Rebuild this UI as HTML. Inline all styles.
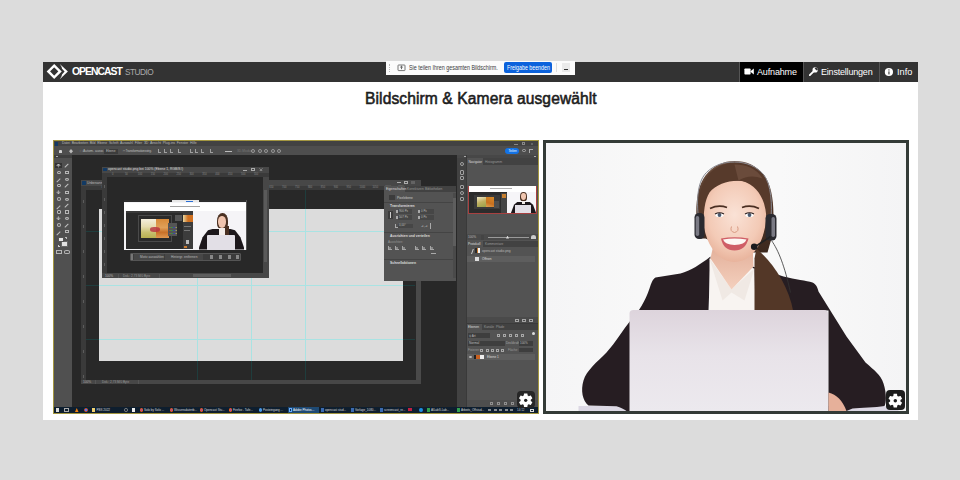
<!DOCTYPE html>
<html><head><meta charset="utf-8">
<style>
*{margin:0;padding:0;box-sizing:border-box}
html,body{width:960px;height:480px;overflow:hidden;background:#dcdcdc;font-family:"Liberation Sans",sans-serif}
.a{position:absolute}
#win{left:43px;top:62px;width:875px;height:358px;background:#fff}
#hdr{left:43px;top:62px;width:875px;height:20px;background:#333}
.wt{color:#fff;white-space:nowrap}
.pt{white-space:nowrap;overflow:visible}
</style></head><body>
<div id="win" class="a"></div>
<div id="hdr" class="a"></div>
<!-- logo -->
<svg class="a" style="left:45px;top:62px" width="25" height="20" viewBox="0 0 25 20">
<path d="M9.2 3.6 L15.05 9.4 L9.2 15.25 L3.35 9.4 Z" fill="none" stroke="#fff" stroke-width="2.4"/>
<path d="M14.8 2 L22.9 9.6 L14.8 17.3 Q17.2 13.8 17 12.5 L19.6 9.6 L17 6.8 Q17.2 5.4 14.8 2 Z" fill="#fff"/>
</svg>
<div class="a wt" style="left:72px;top:65px;font-size:10.4px;font-weight:bold;line-height:14px;letter-spacing:-1px">OPENCAST</div>
<div class="a t" style="left:125px;top:66px;font-size:8.3px;line-height:12px;color:#aaa;letter-spacing:-0.55px">STUDIO</div>

<!-- share notification -->
<div class="a" style="left:386px;top:61px;width:189px;height:14px;background:#fbfbfb"></div>
<div class="a wt" style="left:409px;top:63px;font-size:6.8px;line-height:10px;color:#3a3a3a;transform:scaleX(0.79);transform-origin:0 0">Sie teilen Ihren gesamten Bildschirm.</div>
<div class="a" style="left:504px;top:62px;width:48px;height:11px;background:#0b62dc;border-radius:2px"></div>
<div class="a wt" style="left:507px;top:63px;font-size:6.6px;line-height:9px;transform:scaleX(0.8);transform-origin:0 0">Freigabe beenden</div>
<div class="a" style="left:562px;top:63px;width:8px;height:9px;background:#eaeaea"></div>

<!-- nav -->
<div class="a" style="left:740px;top:62px;width:63px;height:20px;background:#000"></div>
<div class="a" style="left:739px;top:62px;width:1px;height:20px;background:#555"></div>
<div class="a" style="left:803px;top:62px;width:1px;height:20px;background:#555"></div>
<div class="a" style="left:879px;top:62px;width:1px;height:20px;background:#555"></div>
<div class="a wt" style="left:757px;top:66px;font-size:9px;line-height:12px;letter-spacing:-0.15px">Aufnahme</div>
<div class="a wt" style="left:821px;top:66px;font-size:9px;line-height:12px;letter-spacing:-0.2px">Einstellungen</div>
<div class="a wt" style="left:897px;top:66px;font-size:9.2px;line-height:12px">Info</div>

<svg class="a" style="left:744px;top:68px" width="10" height="7" viewBox="0 0 10 7"><rect x="0.4" y="0.4" width="6.2" height="6.2" rx="0.8" fill="#fff"/><path d="M6.2 3.5 L9.8 0.6 L9.8 6.4 Z" fill="#fff"/></svg>
<svg class="a" style="left:809px;top:67px" width="9" height="9" viewBox="0 0 9 9"><path d="M0.8 8.2 L4.6 4.4" stroke="#fff" stroke-width="1.9" stroke-linecap="round"/><circle cx="6.1" cy="2.9" r="2.6" fill="#fff"/><path d="M7 0.2 L9 2.2 L7.6 3.6 L5.6 1.6 Z" fill="#333"/></svg>
<svg class="a" style="left:884px;top:67px" width="10" height="10" viewBox="0 0 10 10"><circle cx="4.9" cy="5" r="4.1" fill="#fff"/><rect x="4.4" y="4.4" width="1.1" height="3" fill="#333"/><circle cx="4.95" cy="2.9" r="0.65" fill="#333"/></svg>
<!-- notification details -->
<div class="a" style="left:389px;top:64px;width:1px;height:8px;border-left:1px dotted #bbb"></div>
<svg class="a" style="left:397px;top:64px" width="9" height="8" viewBox="0 0 9 8"><rect x="1" y="1" width="7" height="5.6" rx="0.6" fill="none" stroke="#555" stroke-width="0.8"/><path d="M4.5 2.2 L4.5 5.2 M3.2 3.4 L4.5 2.2 L5.8 3.4" stroke="#444" stroke-width="0.8" fill="none"/></svg>
<div class="a" style="left:556px;top:63px;width:1px;height:9px;background:#ddd"></div>
<div class="a" style="left:564px;top:69px;width:4px;height:1px;background:#333"></div>
<!-- title -->
<div class="a t" style="left:365px;top:89px;font-size:15.6px;line-height:20px;color:#1e1e1e;white-space:nowrap;letter-spacing:0.1px;-webkit-text-stroke:0.55px #1a1a1a">Bildschirm &amp; Kamera ausgewählt</div>

<!-- left video -->
<div class="a" style="left:54px;top:141px;width:484px;height:272px;background:#282828;"></div>
<div class="a" style="left:54px;top:141px;width:484px;height:5.3px;background:#424242;"></div>
<div class="a" style="left:54px;top:146.3px;width:484px;height:8.5px;background:#4e4e4e;"></div>
<div class="a" style="left:54.5px;top:141.6px;width:3.3px;height:4.0px;background:#123a64;border-radius:.5px"></div>
<div class="a pt" style="left:62px;top:141.4px;font-size:3.5px;line-height:4.5px;color:#b8b8b8;letter-spacing:-0.06px">Datei&nbsp; Bearbeiten&nbsp; Bild&nbsp; Ebene&nbsp; Schrift&nbsp; Auswahl&nbsp; Filter&nbsp; 3D&nbsp; Ansicht&nbsp; Plug-ins&nbsp; Fenster&nbsp; Hilfe</div>
<div class="a" style="left:59px;top:149.5px;width:3px;height:3.5px;background:#d0d0d0;border-radius:1px 1px 0 0"></div>
<div class="a" style="left:69px;top:149px;width:4px;height:4.5px;background:#bbb;clip-path:polygon(50% 0,100% 50%,50% 100%,0 50%)"></div>
<div class="a pt" style="left:80px;top:148.7px;font-size:3.5px;line-height:4.5px;color:#bbb;">&#9633; Autom. ausw.:</div>
<div class="a" style="left:104px;top:148.8px;width:14px;height:5.0px;background:#3c3c3c;"></div>
<div class="a pt" style="left:106px;top:149px;font-size:3.3px;line-height:4.3px;color:#bbb;">Ebene</div>
<div class="a pt" style="left:123px;top:148.7px;font-size:3.3px;line-height:4.3px;color:#bbb;letter-spacing:-0.2px">&#9633; Transformationsstrg.</div>
<div class="a" style="left:158px;top:149.3px;width:3px;height:3.9px;background:transparent;border-left:.7px solid #bbb;border-bottom:.7px solid #bbb;opacity:.75"></div>
<div class="a" style="left:164px;top:149.3px;width:3px;height:3.9px;background:transparent;border-left:.7px solid #bbb;border-bottom:.7px solid #bbb;opacity:.75"></div>
<div class="a" style="left:170px;top:149.3px;width:3px;height:3.9px;background:transparent;border-left:.7px solid #bbb;border-bottom:.7px solid #bbb;opacity:.75"></div>
<div class="a" style="left:178px;top:149.3px;width:3px;height:3.9px;background:transparent;border-left:.7px solid #bbb;border-bottom:.7px solid #bbb;opacity:.75"></div>
<div class="a" style="left:190px;top:149.3px;width:3px;height:3.9px;background:transparent;border-left:.7px solid #bbb;border-bottom:.7px solid #bbb;opacity:.75"></div>
<div class="a" style="left:195px;top:149.3px;width:3px;height:3.9px;background:transparent;border-left:.7px solid #bbb;border-bottom:.7px solid #bbb;opacity:.75"></div>
<div class="a" style="left:201px;top:149.3px;width:3px;height:3.9px;background:transparent;border-left:.7px solid #bbb;border-bottom:.7px solid #bbb;opacity:.75"></div>
<div class="a" style="left:210px;top:149.3px;width:3px;height:3.9px;background:transparent;border-left:.7px solid #bbb;border-bottom:.7px solid #bbb;opacity:.75"></div>
<div class="a" style="left:225px;top:150.6px;width:7px;height:1.0px;background:#bbb;"></div>
<div class="a pt" style="left:237px;top:148.9px;font-size:3.3px;line-height:4.3px;color:#777;">3D-Modus:</div>
<div class="a" style="left:251px;top:149.2px;width:4px;height:4.0px;background:transparent;border:.7px solid #aaa;border-radius:50%;opacity:.8"></div>
<div class="a" style="left:258px;top:149.2px;width:4px;height:4.0px;background:transparent;border:.7px solid #aaa;border-radius:50%;opacity:.8"></div>
<div class="a" style="left:264px;top:149.2px;width:4px;height:4.0px;background:transparent;border:.7px solid #aaa;border-radius:50%;opacity:.8"></div>
<div class="a" style="left:271px;top:149.2px;width:4px;height:4.0px;background:transparent;border:.7px solid #aaa;border-radius:50%;opacity:.8"></div>
<div class="a" style="left:277px;top:149.2px;width:4px;height:4.0px;background:transparent;border:.7px solid #aaa;border-radius:50%;opacity:.8"></div>
<div class="a" style="left:505px;top:147.8px;width:14px;height:6.2px;background:#1473e6;border-radius:3px"></div>
<div class="a pt" style="left:508.5px;top:149px;font-size:3.2px;line-height:4.2px;color:#fff;">Teilen</div>
<div class="a" style="left:522px;top:148.6px;width:3.5px;height:3.5px;background:transparent;border:0.6px solid #aaa;border-radius:50%"></div>
<div class="a" style="left:529px;top:148.8px;width:4px;height:4.0px;background:transparent;border-left:0.8px solid #aaa;border-top:0.8px solid #aaa"></div>
<div class="a" style="left:514px;top:143.8px;width:3.5px;height:0.6px;background:#888;"></div>
<div class="a" style="left:521.5px;top:142.3px;width:3.5px;height:2.7px;background:transparent;border:0.6px solid #888"></div>
<div class="a" style="left:530.5px;top:142.5px;width:2.5px;height:2.0px;background:#888;opacity:.5"></div>
<div class="a" style="left:54px;top:155px;width:17.7px;height:251.5px;background:#505050;"></div>
<div class="a" style="left:54px;top:155px;width:17.7px;height:2.6px;background:#3e3e3e;"></div>
<div class="a" style="left:55.5px;top:156px;width:2.5px;height:0.8px;background:#aaa;"></div>
<div class="a" style="left:55.3px;top:162.5px;width:6.3px;height:5.8px;background:#333;"></div>
<div class="a" style="left:56.3px;top:163.60000000000002px;width:4.3px;height:4.0px;background:transparent;border:0.75px solid #cfcfcf;opacity:.8;clip-path:polygon(50% 0,100% 50%,50% 100%,0 50%)"></div>
<div class="a" style="left:56.8px;top:164.10000000000002px;width:3.3px;height:3.0px;background:#cfcfcf;clip-path:polygon(50% 0,100% 50%,50% 100%,0 50%);opacity:.7"></div>
<div class="a" style="left:64.3px;top:165.3px;width:5.2px;height:0.9px;background:#ccc;transform:rotate(-45deg);opacity:.9"></div>
<div class="a" style="left:56.5px;top:170.5px;width:4.0px;height:3.5px;background:transparent;border:0.75px solid #cfcfcf;opacity:.8;border-radius:50%"></div>
<div class="a" style="left:64.8px;top:170.5px;width:4.0px;height:3.8px;background:transparent;border:0.75px solid #cfcfcf;opacity:.8;"></div>
<div class="a" style="left:56.3px;top:180.3px;width:4.7px;height:0.8px;background:#ccc;transform:rotate(-45deg);opacity:.85"></div>
<div class="a" style="left:64.5px;top:177.5px;width:4.3px;height:3.0px;background:transparent;border:0.75px solid #cfcfcf;opacity:.8;border-radius:50%"></div>
<div class="a" style="left:56.5px;top:183.5px;width:4.0px;height:3.8px;background:transparent;border:0.75px solid #cfcfcf;opacity:.8;border-radius:1px"></div>
<div class="a" style="left:64.3px;top:185px;width:5.2px;height:0.9px;background:#ccc;transform:rotate(-45deg);opacity:.9"></div>
<div class="a" style="left:56.3px;top:190.3px;width:4.3px;height:4.0px;background:transparent;border:0.75px solid #cfcfcf;opacity:.8;clip-path:polygon(50% 0,100% 50%,50% 100%,0 50%)"></div>
<div class="a" style="left:56.8px;top:190.8px;width:3.3px;height:3.0px;background:#cfcfcf;clip-path:polygon(50% 0,100% 50%,50% 100%,0 50%);opacity:.7"></div>
<div class="a" style="left:64.8px;top:190.5px;width:4.0px;height:3.8px;background:transparent;border:0.75px solid #cfcfcf;opacity:.8;"></div>
<div class="a" style="left:56.5px;top:197.0px;width:4.0px;height:3.5px;background:transparent;border:0.75px solid #cfcfcf;opacity:.8;border-radius:50%"></div>
<div class="a" style="left:64.5px;top:197.5px;width:4.3px;height:3.0px;background:transparent;border:0.75px solid #cfcfcf;opacity:.8;border-radius:50%"></div>
<div class="a" style="left:56.3px;top:206.8px;width:4.7px;height:0.8px;background:#ccc;transform:rotate(-45deg);opacity:.85"></div>
<div class="a" style="left:64.3px;top:205px;width:5.2px;height:0.9px;background:#ccc;transform:rotate(-45deg);opacity:.9"></div>
<div class="a" style="left:56.5px;top:210.0px;width:4.0px;height:3.8px;background:transparent;border:0.75px solid #cfcfcf;opacity:.8;border-radius:1px"></div>
<div class="a" style="left:64.8px;top:210.0px;width:4.0px;height:3.8px;background:transparent;border:0.75px solid #cfcfcf;opacity:.8;"></div>
<div class="a" style="left:56.3px;top:216.3px;width:4.3px;height:4.0px;background:transparent;border:0.75px solid #cfcfcf;opacity:.8;clip-path:polygon(50% 0,100% 50%,50% 100%,0 50%)"></div>
<div class="a" style="left:56.8px;top:216.8px;width:3.3px;height:3.0px;background:#cfcfcf;clip-path:polygon(50% 0,100% 50%,50% 100%,0 50%);opacity:.7"></div>
<div class="a" style="left:64.5px;top:217px;width:4.3px;height:3px;background:transparent;border:0.75px solid #cfcfcf;opacity:.8;border-radius:50%"></div>
<div class="a" style="left:56.5px;top:223.0px;width:4.0px;height:3.5px;background:transparent;border:0.75px solid #cfcfcf;opacity:.8;border-radius:50%"></div>
<div class="a" style="left:64.3px;top:224.5px;width:5.2px;height:0.9px;background:#ccc;transform:rotate(-45deg);opacity:.9"></div>
<div class="a" style="left:56.3px;top:232.8px;width:4.7px;height:0.8px;background:#ccc;transform:rotate(-45deg);opacity:.85"></div>
<div class="a" style="left:64.8px;top:229.5px;width:4.0px;height:3.8px;background:transparent;border:0.75px solid #cfcfcf;opacity:.8;"></div>
<div class="a" style="left:61.2px;top:240.8px;width:6.7px;height:6.0px;background:#e2e2e2;border:0.6px solid #666"></div>
<div class="a" style="left:57.5px;top:236.7px;width:6.3px;height:5.8px;background:#e6e6e6;border:0.6px solid #555"></div>
<div class="a" style="left:57.5px;top:244.5px;width:2.0px;height:2.0px;background:transparent;border-left:.6px solid #ccc;border-bottom:.6px solid #ccc"></div>
<div class="a" style="left:65px;top:236.8px;width:2px;height:2.0px;background:transparent;border-top:.6px solid #bbb;border-right:.6px solid #bbb"></div>
<div class="a" style="left:56px;top:250px;width:5.5px;height:3.8px;background:transparent;border:0.75px solid #cfcfcf;opacity:.8;"></div>
<div class="a" style="left:64.2px;top:250px;width:5.6px;height:3.8px;background:transparent;border:0.75px solid #cfcfcf;opacity:.8;border-radius:40%"></div>
<div class="a" style="left:81px;top:180px;width:340px;height:5.5px;background:#474747;"></div>
<div class="a" style="left:81px;top:185.5px;width:340px;height:4.5px;background:#3a3a3a;"></div>
<div class="a" style="left:81px;top:190px;width:5.2px;height:189.8px;background:#3a3a3a;"></div>
<div class="a" style="left:415.5px;top:190px;width:5.5px;height:189.8px;background:#4a4a4a;"></div>
<div class="a" style="left:81px;top:379.8px;width:340px;height:4.7px;background:#474747;"></div>
<div class="a" style="left:95px;top:380.4px;width:1px;height:3.6px;background:#555;"></div>
<div class="a" style="left:138px;top:380.4px;width:1px;height:3.6px;background:#555;"></div>
<div class="a pt" style="left:83px;top:380px;font-size:3.2px;line-height:4.2px;color:#aaa;">100%</div>
<div class="a pt" style="left:102px;top:380px;font-size:3.1px;line-height:4.1px;color:#999;">Dok.: 2,73 M/0 Byte</div>
<div class="a" style="left:397px;top:181.5px;width:4px;height:0.8px;background:#aaa;"></div>
<div class="a" style="left:404px;top:180.8px;width:4px;height:3.2px;background:transparent;border:.6px solid #aaa"></div>
<div class="a" style="left:411px;top:181px;width:4px;height:3px;background:#777;opacity:.6"></div>
<div class="a pt" style="left:101.5px;top:186px;font-size:2.6px;line-height:3.6px;color:#888;">0</div>
<div class="a pt" style="left:114.4px;top:186px;font-size:2.6px;line-height:3.6px;color:#888;">50</div>
<div class="a pt" style="left:127.3px;top:186px;font-size:2.6px;line-height:3.6px;color:#888;">100</div>
<div class="a pt" style="left:140.2px;top:186px;font-size:2.6px;line-height:3.6px;color:#888;">150</div>
<div class="a pt" style="left:153.1px;top:186px;font-size:2.6px;line-height:3.6px;color:#888;">200</div>
<div class="a pt" style="left:166.0px;top:186px;font-size:2.6px;line-height:3.6px;color:#888;">250</div>
<div class="a pt" style="left:178.9px;top:186px;font-size:2.6px;line-height:3.6px;color:#888;">300</div>
<div class="a pt" style="left:191.8px;top:186px;font-size:2.6px;line-height:3.6px;color:#888;">350</div>
<div class="a pt" style="left:204.7px;top:186px;font-size:2.6px;line-height:3.6px;color:#888;">400</div>
<div class="a pt" style="left:217.60000000000002px;top:186px;font-size:2.6px;line-height:3.6px;color:#888;">450</div>
<div class="a pt" style="left:230.5px;top:186px;font-size:2.6px;line-height:3.6px;color:#888;">500</div>
<div class="a pt" style="left:243.4px;top:186px;font-size:2.6px;line-height:3.6px;color:#888;">550</div>
<div class="a pt" style="left:256.3px;top:186px;font-size:2.6px;line-height:3.6px;color:#888;">600</div>
<div class="a pt" style="left:269.20000000000005px;top:186px;font-size:2.6px;line-height:3.6px;color:#888;">650</div>
<div class="a pt" style="left:282.1px;top:186px;font-size:2.6px;line-height:3.6px;color:#888;">700</div>
<div class="a pt" style="left:295.0px;top:186px;font-size:2.6px;line-height:3.6px;color:#888;">750</div>
<div class="a pt" style="left:307.9px;top:186px;font-size:2.6px;line-height:3.6px;color:#888;">800</div>
<div class="a pt" style="left:320.8px;top:186px;font-size:2.6px;line-height:3.6px;color:#888;">850</div>
<div class="a pt" style="left:333.70000000000005px;top:186px;font-size:2.6px;line-height:3.6px;color:#888;">900</div>
<div class="a pt" style="left:346.6px;top:186px;font-size:2.6px;line-height:3.6px;color:#888;">950</div>
<div class="a pt" style="left:359.5px;top:186px;font-size:2.6px;line-height:3.6px;color:#888;">1000</div>
<div class="a pt" style="left:372.40000000000003px;top:186px;font-size:2.6px;line-height:3.6px;color:#888;">1050</div>
<div class="a pt" style="left:385.3px;top:186px;font-size:2.6px;line-height:3.6px;color:#888;">1100</div>
<div class="a pt" style="left:398.2px;top:186px;font-size:2.6px;line-height:3.6px;color:#888;">1150</div>
<div class="a" style="left:82.8px;top:200px;width:1.5px;height:3px;background:#888;opacity:.45"></div>
<div class="a" style="left:82.8px;top:225px;width:1.5px;height:3px;background:#888;opacity:.45"></div>
<div class="a" style="left:82.8px;top:250px;width:1.5px;height:3px;background:#888;opacity:.45"></div>
<div class="a" style="left:82.8px;top:275px;width:1.5px;height:3px;background:#888;opacity:.45"></div>
<div class="a" style="left:82.8px;top:300px;width:1.5px;height:3px;background:#888;opacity:.45"></div>
<div class="a" style="left:82.8px;top:325px;width:1.5px;height:3px;background:#888;opacity:.45"></div>
<div class="a" style="left:82.8px;top:350px;width:1.5px;height:3px;background:#888;opacity:.45"></div>
<div class="a" style="left:82.8px;top:375px;width:1.5px;height:3px;background:#888;opacity:.45"></div>
<div class="a" style="left:82px;top:181px;width:3.5px;height:3.6px;background:#123a64;border-radius:.5px"></div>
<div class="a pt" style="left:87px;top:180.6px;font-size:3.3px;line-height:4.3px;color:#bbb;">Unbenannt-1 bei 100% (RGB/8)</div>
<div class="a" style="left:98.8px;top:208.6px;width:303.8px;height:152.6px;background:#dcdcdc;"></div>
<div class="a" style="left:86.2px;top:231px;width:329.3px;height:1px;background:#1f3d3d;"></div>
<div class="a" style="left:98.8px;top:231px;width:303.8px;height:1px;background:#a9e3e3;"></div>
<div class="a" style="left:86.2px;top:285px;width:329.3px;height:1px;background:#1f3d3d;"></div>
<div class="a" style="left:98.8px;top:285px;width:303.8px;height:1px;background:#a9e3e3;"></div>
<div class="a" style="left:86.2px;top:338.5px;width:329.3px;height:1.0px;background:#1f3d3d;"></div>
<div class="a" style="left:98.8px;top:338.5px;width:303.8px;height:1.0px;background:#a9e3e3;"></div>
<div class="a" style="left:197.4px;top:190px;width:1.0px;height:189.8px;background:#1f3d3d;"></div>
<div class="a" style="left:197.4px;top:208.6px;width:1.0px;height:152.6px;background:#a9e3e3;"></div>
<div class="a" style="left:251.4px;top:190px;width:1.0px;height:189.8px;background:#1f3d3d;"></div>
<div class="a" style="left:251.4px;top:208.6px;width:1.0px;height:152.6px;background:#a9e3e3;"></div>
<div class="a" style="left:305px;top:190px;width:1px;height:189.8px;background:#1f3d3d;"></div>
<div class="a" style="left:305px;top:208.6px;width:1px;height:152.6px;background:#a9e3e3;"></div>
<div class="a" style="left:102px;top:166.6px;width:166.8px;height:6.2px;background:#474747;"></div>
<div class="a" style="left:102px;top:172.8px;width:166.8px;height:4.2px;background:#3a3a3a;"></div>
<div class="a" style="left:102px;top:177px;width:5.2px;height:96.2px;background:#3a3a3a;"></div>
<div class="a" style="left:107.2px;top:177px;width:155.8px;height:96.2px;background:#282828;"></div>
<div class="a" style="left:263px;top:177px;width:5.8px;height:96.2px;background:#474747;"></div>
<div class="a" style="left:264.3px;top:190px;width:3.2px;height:72px;background:#5a5a5a;"></div>
<div class="a" style="left:102px;top:273.2px;width:166.8px;height:5.2px;background:#474747;"></div>
<div class="a" style="left:192.8px;top:274.2px;width:38.4px;height:3.2px;background:#5e5e5e;"></div>
<div class="a pt" style="left:105px;top:273.6px;font-size:3.2px;line-height:4.2px;color:#bbb;">100%</div>
<div class="a pt" style="left:123px;top:273.6px;font-size:3.1px;line-height:4.1px;color:#999;">Dok.: 2,73 M/0 Byte</div>
<div class="a" style="left:118px;top:274px;width:1px;height:3.6px;background:#555;"></div>
<div class="a" style="left:159px;top:274px;width:1px;height:3.6px;background:#555;"></div>
<div class="a" style="left:137px;top:254.3px;width:2.5px;height:4.7px;background:#ccc;opacity:.6"></div>
<div class="a" style="left:167.5px;top:254.5px;width:3.0px;height:4.5px;background:transparent;border:.6px solid #bbb;opacity:.7"></div>
<div class="a" style="left:103px;top:167.8px;width:3.5px;height:3.7px;background:#123a64;border-radius:.5px"></div>
<div class="a pt" style="left:108px;top:167.3px;font-size:3.4px;line-height:4.4px;color:#ddd;">opencast studio.png bei 100% (Ebene 1, RGB/8#)</div>
<div class="a" style="left:243px;top:169.5px;width:4px;height:0.7px;background:#aaa;"></div>
<div class="a" style="left:251px;top:168px;width:4px;height:3.3px;background:transparent;border:.6px solid #aaa"></div>
<div class="a" style="left:259px;top:168.2px;width:4px;height:3.3px;background:#aaa;clip-path:polygon(0 0,15% 0,50% 40%,85% 0,100% 0,60% 50%,100% 100%,85% 100%,50% 60%,15% 100%,0 100%,40% 50%)"></div>
<div class="a pt" style="left:112.0px;top:172.7px;font-size:2.6px;line-height:3.6px;color:#888;">0</div>
<div class="a pt" style="left:124.9px;top:172.7px;font-size:2.6px;line-height:3.6px;color:#888;">50</div>
<div class="a pt" style="left:137.8px;top:172.7px;font-size:2.6px;line-height:3.6px;color:#888;">100</div>
<div class="a pt" style="left:150.7px;top:172.7px;font-size:2.6px;line-height:3.6px;color:#888;">150</div>
<div class="a pt" style="left:163.6px;top:172.7px;font-size:2.6px;line-height:3.6px;color:#888;">200</div>
<div class="a pt" style="left:176.5px;top:172.7px;font-size:2.6px;line-height:3.6px;color:#888;">250</div>
<div class="a pt" style="left:189.4px;top:172.7px;font-size:2.6px;line-height:3.6px;color:#888;">300</div>
<div class="a pt" style="left:202.3px;top:172.7px;font-size:2.6px;line-height:3.6px;color:#888;">350</div>
<div class="a pt" style="left:215.2px;top:172.7px;font-size:2.6px;line-height:3.6px;color:#888;">400</div>
<div class="a pt" style="left:228.10000000000002px;top:172.7px;font-size:2.6px;line-height:3.6px;color:#888;">450</div>
<div class="a pt" style="left:241.0px;top:172.7px;font-size:2.6px;line-height:3.6px;color:#888;">500</div>
<div class="a pt" style="left:253.9px;top:172.7px;font-size:2.6px;line-height:3.6px;color:#888;">550</div>
<div class="a" style="left:103.8px;top:185px;width:1.5px;height:3px;background:#888;opacity:.45"></div>
<div class="a" style="left:103.8px;top:198px;width:1.5px;height:3px;background:#888;opacity:.45"></div>
<div class="a" style="left:103.8px;top:211px;width:1.5px;height:3px;background:#888;opacity:.45"></div>
<div class="a" style="left:103.8px;top:224px;width:1.5px;height:3px;background:#888;opacity:.45"></div>
<div class="a" style="left:103.8px;top:237px;width:1.5px;height:3px;background:#888;opacity:.45"></div>
<div class="a" style="left:103.8px;top:250px;width:1.5px;height:3px;background:#888;opacity:.45"></div>
<div class="a" style="left:103.8px;top:263px;width:1.5px;height:3px;background:#888;opacity:.45"></div>
<div class="a" style="left:130px;top:252.5px;width:110.6px;height:8.5px;background:#3c3c3c;border:0.6px solid #555;border-radius:1px"></div>
<div class="a" style="left:131px;top:253.5px;width:1.5px;height:6.5px;background:#777;"></div>
<div class="a" style="left:134px;top:253.6px;width:29.5px;height:6.4px;background:#474747;"></div>
<div class="a pt" style="left:140px;top:254.6px;font-size:3.2px;line-height:4.2px;color:#bbb;">Motiv auswählen</div>
<div class="a" style="left:165px;top:253.6px;width:38px;height:6.4px;background:#474747;"></div>
<div class="a pt" style="left:171px;top:254.6px;font-size:3.2px;line-height:4.2px;color:#bbb;">Hintergr. entfernen</div>
<div class="a" style="left:210px;top:255px;width:3px;height:3.5px;background:#aaa;opacity:.7"></div>
<div class="a" style="left:219px;top:255px;width:3px;height:3.5px;background:#aaa;opacity:.7"></div>
<div class="a" style="left:228px;top:255px;width:3px;height:3.5px;background:#aaa;opacity:.7"></div>
<div class="a" style="left:236px;top:255px;width:3px;height:3.5px;background:#aaa;opacity:.7"></div>
<div class="a" style="left:124px;top:199.7px;width:122.6px;height:50.1px;background:#f4f4f6;"></div>
<div class="a" style="left:124px;top:199.7px;width:122.6px;height:2.8px;background:#2e2e2e;"></div>
<div class="a" style="left:172px;top:200.4px;width:26.5px;height:1.6px;background:#e8e8e8;"></div>
<div class="a" style="left:186px;top:200.6px;width:7px;height:1.2px;background:#2a6fd6;"></div>
<div class="a" style="left:124px;top:202.5px;width:122.6px;height:8.5px;background:#ffffff;"></div>
<div class="a" style="left:170px;top:206px;width:30px;height:1.2px;background:#555;opacity:.55"></div>
<div class="a" style="left:125.5px;top:211px;width:67.7px;height:38.4px;background:#2a2a2a;"></div>
<div class="a" style="left:126px;top:211px;width:67.2px;height:2px;background:#3a3a3a;"></div>
<div class="a" style="left:138.3px;top:215px;width:33.4px;height:26.7px;background:transparent;border:.7px solid #4a4a4a"></div>
<div class="a" style="left:140.8px;top:218.8px;width:15.4px;height:19.5px;background:linear-gradient(180deg,#f4eedc,#e6dcb0 40%,#c8c070 70%,#b8b050);"></div>
<div class="a" style="left:155.5px;top:218.8px;width:13.7px;height:19.5px;background:linear-gradient(180deg,#d88a38,#e0a058 45%,#c87028 70%,#e09850);"></div>
<div class="a" style="left:150px;top:226.5px;width:10px;height:5.5px;background:#b83040;border-radius:40%;opacity:.8"></div>
<div class="a" style="left:167.9px;top:223px;width:9.6px;height:12.8px;background:#555;"></div>
<div class="a" style="left:169px;top:227px;width:7.5px;height:1.3px;background:linear-gradient(90deg,#c33,#3a3,#33c,#cc3);opacity:.8"></div>
<div class="a" style="left:169px;top:230px;width:7.5px;height:1.3px;background:linear-gradient(90deg,#c33,#3a3,#33c,#cc3);opacity:.8"></div>
<div class="a" style="left:169px;top:233px;width:7.5px;height:1.3px;background:linear-gradient(90deg,#c33,#3a3,#33c,#cc3);opacity:.8"></div>
<div class="a" style="left:174.6px;top:215.4px;width:7.1px;height:5.4px;background:#555;"></div>
<div class="a" style="left:182.5px;top:213px;width:10.7px;height:36px;background:#3c3c3c;"></div>
<div class="a" style="left:183px;top:215px;width:10px;height:7px;background:linear-gradient(90deg,#e8d8a0,#d07020 50%);"></div>
<div class="a" style="left:184px;top:226px;width:7px;height:1px;background:#777;"></div>
<div class="a" style="left:184px;top:230px;width:6px;height:1px;background:#777;"></div>
<div class="a" style="left:186px;top:240px;width:3px;height:4px;background:#bbb;"></div>
<div class="a" style="left:184px;top:246px;width:3px;height:2px;background:#c87a30;"></div>
<div class="a" style="left:193.2px;top:211px;width:53.4px;height:38.6px;background:#f5f4f7;"></div>
<div class="a" style="left:199px;top:229px;width:45px;height:20.6px;background:#1c171b;clip-path:polygon(30% 0,70% 0,80% 6%,92% 40%,100% 90%,100% 100%,0 100%,0 90%,8% 40%,20% 6%)"></div>
<div class="a" style="left:216.8px;top:213px;width:10.8px;height:16px;background:#4a3022;border-radius:50% 50% 35% 35%"></div>
<div class="a" style="left:217.8px;top:215.5px;width:8.6px;height:12.7px;background:#f0c4ae;border-radius:45% 45% 50% 50%"></div>
<div class="a" style="left:219px;top:228px;width:5.5px;height:7px;background:#f2ece8;"></div>
<div class="a" style="left:225px;top:226px;width:4px;height:9px;background:#4a3022;"></div>
<div class="a" style="left:206.7px;top:235px;width:28.3px;height:14.6px;background:#e2dfe6;border-radius:1px 1px 0 0"></div>
<div class="a" style="left:246.1px;top:199.7px;width:1.0px;height:50.1px;background:#555;"></div>
<div class="a" style="left:384.3px;top:185.5px;width:72.0px;height:95.0px;background:#535353;"></div>
<div class="a" style="left:384.3px;top:185.5px;width:72.0px;height:6.5px;background:#424242;"></div>
<div class="a" style="left:384.3px;top:185.5px;width:20.7px;height:6.5px;background:#535353;"></div>
<div class="a pt" style="left:386px;top:187px;font-size:3.2px;line-height:4.2px;color:#ddd;">Eigenschaften</div>
<div class="a pt" style="left:407px;top:187px;font-size:3.2px;line-height:4.2px;color:#999;">Korrekturen</div>
<div class="a pt" style="left:425px;top:187px;font-size:3.2px;line-height:4.2px;color:#999;">Bibliotheken</div>
<div class="a" style="left:389px;top:195px;width:6px;height:5px;background:#3c3c3c;"></div>
<div class="a pt" style="left:397px;top:195.5px;font-size:3.2px;line-height:4.2px;color:#ccc;">Pixelebene</div>
<div class="a" style="left:384.3px;top:202.2px;width:72.0px;height:0.6px;background:#444;"></div>
<div class="a pt" style="left:390px;top:204px;font-size:3.4px;line-height:4.4px;color:#ddd;;font-weight:bold">Transformieren</div>
<div class="a" style="left:388px;top:210.5px;width:4.5px;height:8.5px;background:#3c3c3c;"></div>
<div class="a" style="left:389.6px;top:212px;width:1.4px;height:5.5px;background:#ccc;"></div>
<div class="a" style="left:395.5px;top:209.9px;width:1.7px;height:2.8px;background:transparent;border:.5px solid #aaa"></div>
<div class="a" style="left:398px;top:209.3px;width:14px;height:4.3px;background:#464646;"></div>
<div class="a pt" style="left:399px;top:209.70000000000002px;font-size:2.9px;line-height:3.9px;color:#bbb;">900 Px</div>
<div class="a" style="left:395.5px;top:215.9px;width:1.7px;height:2.8px;background:transparent;border:.5px solid #aaa"></div>
<div class="a" style="left:398px;top:215.3px;width:14px;height:4.3px;background:#464646;"></div>
<div class="a pt" style="left:399px;top:215.70000000000002px;font-size:2.9px;line-height:3.9px;color:#bbb;">507 Px</div>
<div class="a" style="left:417.5px;top:209.9px;width:1.7px;height:2.8px;background:transparent;border:.5px solid #aaa"></div>
<div class="a" style="left:420px;top:209.3px;width:14px;height:4.3px;background:#464646;"></div>
<div class="a pt" style="left:421px;top:209.70000000000002px;font-size:2.9px;line-height:3.9px;color:#bbb;">0 Px</div>
<div class="a" style="left:417.5px;top:215.9px;width:1.7px;height:2.8px;background:transparent;border:.5px solid #aaa"></div>
<div class="a" style="left:420px;top:215.3px;width:14px;height:4.3px;background:#464646;"></div>
<div class="a pt" style="left:421px;top:215.70000000000002px;font-size:2.9px;line-height:3.9px;color:#bbb;">0 Px</div>
<div class="a" style="left:395px;top:224px;width:2.5px;height:3.5px;background:transparent;border-left:.6px solid #aaa;border-bottom:.6px solid #aaa"></div>
<div class="a" style="left:398px;top:223.6px;width:15px;height:4.2px;background:#464646;"></div>
<div class="a pt" style="left:399px;top:224px;font-size:2.9px;line-height:3.9px;color:#bbb;">0,00°</div>
<div class="a pt" style="left:421px;top:223.5px;font-size:3.2px;line-height:4.2px;color:#ccc;">&#8895;,&#8895;</div>
<div class="a" style="left:430px;top:222.5px;width:2px;height:6.5px;background:transparent;border-left:.6px solid #aaa"></div>
<div class="a" style="left:384.3px;top:231.8px;width:72.0px;height:0.6px;background:#444;"></div>
<div class="a pt" style="left:390px;top:233.5px;font-size:3.4px;line-height:4.4px;color:#ddd;;font-weight:bold">Ausrichten und verteilen</div>
<div class="a pt" style="left:388px;top:239.5px;font-size:3px;line-height:4px;color:#999;">Ausrichten:</div>
<div class="a" style="left:388px;top:245.5px;width:3.5px;height:4.0px;background:transparent;border-left:.6px solid #bbb;border-bottom:.6px solid #bbb;opacity:.8"></div>
<div class="a" style="left:389.2px;top:246.5px;width:1.4px;height:2.3px;background:#aaa;opacity:.6"></div>
<div class="a" style="left:395px;top:245.5px;width:3.5px;height:4.0px;background:transparent;border-left:.6px solid #bbb;border-bottom:.6px solid #bbb;opacity:.8"></div>
<div class="a" style="left:396.2px;top:246.5px;width:1.4px;height:2.3px;background:#aaa;opacity:.6"></div>
<div class="a" style="left:402px;top:245.5px;width:3.5px;height:4.0px;background:transparent;border-left:.6px solid #bbb;border-bottom:.6px solid #bbb;opacity:.8"></div>
<div class="a" style="left:403.2px;top:246.5px;width:1.4px;height:2.3px;background:#aaa;opacity:.6"></div>
<div class="a" style="left:415px;top:245.5px;width:3.5px;height:4.0px;background:transparent;border-left:.6px solid #bbb;border-bottom:.6px solid #bbb;opacity:.8"></div>
<div class="a" style="left:416.2px;top:246.5px;width:1.4px;height:2.3px;background:#aaa;opacity:.6"></div>
<div class="a" style="left:422px;top:245.5px;width:3.5px;height:4.0px;background:transparent;border-left:.6px solid #bbb;border-bottom:.6px solid #bbb;opacity:.8"></div>
<div class="a" style="left:423.2px;top:246.5px;width:1.4px;height:2.3px;background:#aaa;opacity:.6"></div>
<div class="a" style="left:430px;top:245.5px;width:3.5px;height:4.0px;background:transparent;border-left:.6px solid #bbb;border-bottom:.6px solid #bbb;opacity:.8"></div>
<div class="a" style="left:431.2px;top:246.5px;width:1.4px;height:2.3px;background:#aaa;opacity:.6"></div>
<div class="a" style="left:431px;top:253px;width:5px;height:1px;background:#aaa;"></div>
<div class="a" style="left:384.3px;top:259px;width:72.0px;height:0.6px;background:#444;"></div>
<div class="a pt" style="left:390px;top:261px;font-size:3.4px;line-height:4.4px;color:#ddd;;font-weight:bold">Schnellaktionen</div>
<div class="a" style="left:453px;top:193px;width:3px;height:85px;background:#4a4a4a;"></div>
<div class="a" style="left:453.2px;top:198px;width:2.6px;height:48px;background:#5e5e5e;"></div>
<div class="a" style="left:457px;top:155px;width:9.8px;height:251.5px;background:#424242;"></div>
<div class="a" style="left:459.5px;top:161.5px;width:4.5px;height:4.5px;background:transparent;border:0.75px solid #c8c8c8;opacity:.7;border-radius:50%"></div>
<div class="a" style="left:459.5px;top:170px;width:4.5px;height:4.5px;background:transparent;border:0.75px solid #c8c8c8;opacity:.7;border-radius:1px"></div>
<div class="a" style="left:459.5px;top:175.5px;width:4.5px;height:4.5px;background:transparent;border:0.75px solid #c8c8c8;opacity:.7;border-radius:1px"></div>
<div class="a" style="left:459.5px;top:184.5px;width:4.5px;height:4.5px;background:transparent;border:0.75px solid #c8c8c8;opacity:.7;border-radius:1px"></div>
<div class="a" style="left:459.5px;top:190.5px;width:4.5px;height:4.5px;background:transparent;border:0.75px solid #c8c8c8;opacity:.7;border-radius:50%"></div>
<div class="a" style="left:459.5px;top:196.5px;width:4.5px;height:4.5px;background:transparent;border:0.75px solid #c8c8c8;opacity:.7;border-radius:1px"></div>
<div class="a" style="left:466.8px;top:155px;width:71.2px;height:251.5px;background:#535353;"></div>
<div class="a" style="left:466.8px;top:155px;width:71.2px;height:3.3px;background:#474747;"></div>
<div class="a" style="left:457px;top:155px;width:9.8px;height:3.3px;background:#474747;"></div>
<div class="a" style="left:466.4px;top:155px;width:0.6px;height:251.5px;background:#3a3a3a;"></div>
<div class="a" style="left:464px;top:156.3px;width:1.5px;height:0.6px;background:#aaa;"></div>
<div class="a" style="left:534px;top:156.3px;width:1.5px;height:0.6px;background:#aaa;"></div>
<div class="a" style="left:466.8px;top:158.3px;width:71.2px;height:6.3px;background:#424242;"></div>
<div class="a" style="left:467px;top:158.3px;width:16.3px;height:6.3px;background:#535353;"></div>
<div class="a pt" style="left:468.5px;top:159.6px;font-size:3.2px;line-height:4.2px;color:#ddd;">Navigator</div>
<div class="a pt" style="left:485px;top:159.6px;font-size:3.2px;line-height:4.2px;color:#999;">Histogramm</div>
<div class="a" style="left:468.2px;top:185.5px;width:68.8px;height:28.7px;background:#f4f3f6;border:0.8px solid #a84040"></div>
<div class="a" style="left:469.0px;top:186.3px;width:67.2px;height:5.6px;background:#ffffff;"></div>
<div class="a" style="left:490px;top:187.5px;width:22px;height:1.0px;background:#777;opacity:.6"></div>
<div class="a" style="left:469.0px;top:191.9px;width:38.0px;height:21.5px;background:#2c2c2c;"></div>
<div class="a" style="left:474px;top:194.5px;width:26px;height:14.5px;background:#3a3a3a;"></div>
<div class="a" style="left:477px;top:196.5px;width:8.5px;height:10.5px;background:linear-gradient(160deg,#f0e8c8,#c0b060 50%,#98a048);"></div>
<div class="a" style="left:485.5px;top:196.5px;width:8.5px;height:10.5px;background:linear-gradient(200deg,#d88a28,#c87020 60%,#e0a050);"></div>
<div class="a" style="left:494px;top:201px;width:5px;height:7px;background:#4e4e4e;"></div>
<div class="a" style="left:501px;top:193px;width:6px;height:20px;background:#444;"></div>
<div class="a" style="left:502px;top:194px;width:4px;height:4px;background:#c88030;"></div>
<div class="a" style="left:507px;top:192px;width:29.2px;height:21.4px;background:#f6f5f8;"></div>
<div class="a" style="left:511px;top:202px;width:25px;height:11.4px;background:#1c171b;clip-path:polygon(25% 0,75% 0,88% 25%,100% 95%,100% 100%,0 100%,0 95%,12% 25%)"></div>
<div class="a" style="left:519.5px;top:191.8px;width:7.3px;height:9.2px;background:#4a3022;border-radius:50% 50% 35% 35%"></div>
<div class="a" style="left:520.5px;top:193.3px;width:5.3px;height:7.2px;background:#f0c6b0;border-radius:45% 45% 50% 50%"></div>
<div class="a" style="left:521.5px;top:200.5px;width:3.5px;height:3.0px;background:#f2ece8;"></div>
<div class="a" style="left:515px;top:205px;width:16px;height:8.4px;background:#e2dfe6;"></div>
<div class="a" style="left:466.8px;top:234.2px;width:71.2px;height:6.3px;background:#4a4a4a;"></div>
<div class="a pt" style="left:468px;top:235px;font-size:3.2px;line-height:4.2px;color:#bbb;">100%</div>
<div class="a" style="left:481px;top:234.5px;width:3px;height:5.0px;background:#444;"></div>
<div class="a" style="left:488px;top:236.7px;width:41px;height:0.6px;background:#999;"></div>
<div class="a" style="left:506px;top:235.5px;width:3px;height:3.0px;background:#ddd;clip-path:polygon(50% 0,100% 100%,0 100%)"></div>
<div class="a" style="left:531px;top:235px;width:5px;height:3.5px;background:#ccc;border-radius:50% 50% 0 0"></div>
<div class="a" style="left:466.8px;top:240.5px;width:71.2px;height:6.7px;background:#424242;"></div>
<div class="a" style="left:467px;top:240.5px;width:15.5px;height:6.7px;background:#535353;"></div>
<div class="a pt" style="left:468px;top:242.2px;font-size:3.2px;line-height:4.2px;color:#ddd;">Protokoll</div>
<div class="a pt" style="left:485px;top:242.2px;font-size:3.2px;line-height:4.2px;color:#999;">Kommentare</div>
<div class="a" style="left:469px;top:248.5px;width:4px;height:4.5px;background:transparent;border-right:.7px solid #ccc;transform:skewX(-20deg)"></div>
<div class="a" style="left:474.5px;top:248.3px;width:5.0px;height:5.0px;background:linear-gradient(90deg,#2a2a2a 0 40%,#c87a30 40% 55%,#f4f4f4 55%);"></div>
<div class="a pt" style="left:482px;top:248.6px;font-size:3.2px;line-height:4.2px;color:#bbb;">opencast studio.png</div>
<div class="a" style="left:466.8px;top:255.7px;width:68.2px;height:6.0px;background:#5e5e5e;"></div>
<div class="a" style="left:474.5px;top:256.6px;width:4.0px;height:4.2px;background:#ddd;"></div>
<div class="a pt" style="left:482px;top:257px;font-size:3.2px;line-height:4.2px;color:#ddd;">Öffnen</div>
<div class="a" style="left:466.8px;top:317px;width:71.2px;height:6px;background:#4a4a4a;"></div>
<div class="a" style="left:515px;top:318.5px;width:3.5px;height:3.0px;background:transparent;border:.6px solid #ccc;opacity:.7"></div>
<div class="a" style="left:522px;top:318.5px;width:3.5px;height:3.0px;background:transparent;border:.6px solid #ccc;opacity:.7"></div>
<div class="a" style="left:529px;top:318.5px;width:3.5px;height:3.0px;background:transparent;border:.6px solid #ccc;opacity:.7"></div>
<div class="a" style="left:466.8px;top:322.8px;width:71.2px;height:0.8px;background:#3a3a3a;"></div>
<div class="a" style="left:466.8px;top:324.4px;width:71.2px;height:5.6px;background:#424242;"></div>
<div class="a" style="left:466.8px;top:324.4px;width:15.2px;height:5.6px;background:#535353;"></div>
<div class="a pt" style="left:468px;top:325.2px;font-size:3.2px;line-height:4.2px;color:#ddd;">Ebenen</div>
<div class="a pt" style="left:484px;top:325.2px;font-size:3.2px;line-height:4.2px;color:#999;">Kanäle</div>
<div class="a pt" style="left:496px;top:325.2px;font-size:3.2px;line-height:4.2px;color:#999;">Pfade</div>
<div class="a" style="left:468px;top:333px;width:22px;height:5px;background:#3e3e3e;"></div>
<div class="a pt" style="left:469px;top:333.5px;font-size:3px;line-height:4px;color:#bbb;">&#9906; Art</div>
<div class="a" style="left:497px;top:333.6px;width:3.2px;height:3.6px;background:transparent;border:.6px solid #ccc;opacity:.7"></div>
<div class="a" style="left:503px;top:333.6px;width:3.2px;height:3.6px;background:transparent;border:.6px solid #ccc;opacity:.7"></div>
<div class="a" style="left:509px;top:333.6px;width:3.2px;height:3.6px;background:transparent;border:.6px solid #ccc;opacity:.7"></div>
<div class="a" style="left:515px;top:333.6px;width:3.2px;height:3.6px;background:transparent;border:.6px solid #ccc;opacity:.7"></div>
<div class="a" style="left:521px;top:333.6px;width:3.2px;height:3.6px;background:transparent;border:.6px solid #ccc;opacity:.7"></div>
<div class="a" style="left:532px;top:332px;width:3px;height:3px;background:#ddd;border-radius:50%"></div>
<div class="a" style="left:468px;top:340.8px;width:37px;height:5.2px;background:#3e3e3e;"></div>
<div class="a pt" style="left:469px;top:341.2px;font-size:3.2px;line-height:4.2px;color:#bbb;">Normal</div>
<div class="a pt" style="left:506px;top:341.2px;font-size:3.1px;line-height:4.1px;color:#aaa;">Deckkraft:</div>
<div class="a" style="left:519px;top:340.8px;width:14px;height:5.2px;background:#3e3e3e;"></div>
<div class="a pt" style="left:520px;top:341.2px;font-size:3px;line-height:4px;color:#bbb;">100%</div>
<div class="a pt" style="left:468px;top:348.2px;font-size:3.1px;line-height:4.1px;color:#999;">Fixieren:</div>
<div class="a" style="left:480px;top:348.6px;width:2.8px;height:3.0px;background:transparent;border:.6px solid #ccc;opacity:.7"></div>
<div class="a" style="left:486px;top:348.6px;width:2.8px;height:3.0px;background:transparent;border:.6px solid #ccc;opacity:.7"></div>
<div class="a" style="left:491px;top:348.6px;width:2.8px;height:3.0px;background:transparent;border:.6px solid #ccc;opacity:.7"></div>
<div class="a" style="left:496px;top:348.6px;width:2.8px;height:3.0px;background:transparent;border:.6px solid #ccc;opacity:.7"></div>
<div class="a" style="left:501px;top:348.6px;width:2.8px;height:3.0px;background:transparent;border:.6px solid #ccc;opacity:.7"></div>
<div class="a pt" style="left:508px;top:348.2px;font-size:3.1px;line-height:4.1px;color:#999;">Fläche:</div>
<div class="a" style="left:519px;top:347.8px;width:14px;height:4.7px;background:#3e3e3e;"></div>
<div class="a" style="left:466.8px;top:354px;width:68.2px;height:5.6px;background:#5e5e5e;"></div>
<div class="a" style="left:469px;top:355.6px;width:3px;height:2.2px;background:#bbb;border-radius:50%"></div>
<div class="a" style="left:474px;top:354.8px;width:10px;height:4.0px;background:linear-gradient(90deg,#222 0 25%,#c86020 25% 60%,#eee 60%);"></div>
<div class="a pt" style="left:487px;top:355.3px;font-size:3.2px;line-height:4.2px;color:#ddd;">Ebene 1</div>
<div class="a" style="left:466.8px;top:400px;width:71.2px;height:6.5px;background:#4e4e4e;"></div>
<div class="a" style="left:490px;top:401.8px;width:3px;height:3.0px;background:transparent;border:.6px solid #bbb;opacity:.6"></div>
<div class="a" style="left:497px;top:401.8px;width:3px;height:3.0px;background:transparent;border:.6px solid #bbb;opacity:.6"></div>
<div class="a" style="left:504px;top:401.8px;width:3px;height:3.0px;background:transparent;border:.6px solid #bbb;opacity:.6"></div>
<div class="a" style="left:511px;top:401.8px;width:3px;height:3.0px;background:transparent;border:.6px solid #bbb;opacity:.6"></div>
<div class="a" style="left:54px;top:406.5px;width:484px;height:6.7px;background:#0e1e2e;"></div>
<div class="a" style="left:55.5px;top:408.2px;width:3.5px;height:3.4px;background:#ddd;"></div>
<div class="a" style="left:64px;top:408px;width:5px;height:4px;background:transparent;border:0.7px solid #aaa"></div>
<div class="a" style="left:75px;top:408px;width:3.5px;height:4px;background:#f08010;clip-path:polygon(50% 0,100% 100%,0 100%)"></div>
<div class="a" style="left:84px;top:408px;width:4px;height:4px;background:radial-gradient(circle,#4488ee 0 30%,#e33 30% 60%,#3b3 60%);border-radius:50%"></div>
<div class="a" style="left:92px;top:408px;width:3px;height:4px;background:#f0d070;"></div>
<div class="a pt" style="left:96.5px;top:408px;font-size:3px;line-height:4px;color:#ddd;">PBS 2022</div>
<div class="a" style="left:124px;top:408px;width:3.5px;height:3.5px;background:transparent;border:.6px solid #888;border-radius:50%"></div>
<div class="a" style="left:132px;top:408px;width:2.5px;height:4px;background:#eee;"></div>
<div class="a" style="left:140px;top:408px;width:3px;height:3.5px;background:radial-gradient(circle,#a040c0 0 35%,#f06020 35%);border-radius:50%"></div>
<div class="a pt" style="left:144px;top:408px;font-size:3px;line-height:4px;color:#ddd;">Solo by Solo ...</div>
<div class="a" style="left:170px;top:408px;width:3px;height:3.5px;background:radial-gradient(circle,#a040c0 0 35%,#f06020 35%);border-radius:50%"></div>
<div class="a pt" style="left:174px;top:408px;font-size:3px;line-height:4px;color:#ddd;">Wissensdatenb...</div>
<div class="a" style="left:200px;top:408px;width:3px;height:3.5px;background:radial-gradient(circle,#a040c0 0 35%,#f06020 35%);border-radius:50%"></div>
<div class="a pt" style="left:204px;top:408px;font-size:3px;line-height:4px;color:#ddd;">Opencast Stu...</div>
<div class="a" style="left:229px;top:408px;width:3px;height:3.5px;background:radial-gradient(circle,#a040c0 0 35%,#f06020 35%);border-radius:50%"></div>
<div class="a pt" style="left:233px;top:408px;font-size:3px;line-height:4px;color:#ddd;">Firefox - Tafe...</div>
<div class="a" style="left:259px;top:408px;width:3px;height:3.5px;background:#4a9ae8;border-radius:50%"></div>
<div class="a pt" style="left:263px;top:408px;font-size:3px;line-height:4px;color:#ddd;">Posteingang ...</div>
<div class="a" style="left:288px;top:406.5px;width:30.5px;height:6.7px;background:#1e4a74;"></div>
<div class="a pt" style="left:293px;top:408px;font-size:3px;line-height:4px;color:#fff;">Adobe Photos...</div>
<div class="a" style="left:289px;top:408px;width:3px;height:3.5px;background:#0b2b50;border:.5px solid #6af"></div>
<div class="a" style="left:321px;top:408px;width:2.5px;height:4px;background:#3a6ab0;"></div>
<div class="a pt" style="left:325px;top:408px;font-size:3px;line-height:4px;color:#ddd;">opencast stud...</div>
<div class="a" style="left:351px;top:408px;width:2.5px;height:4px;background:#3a6ab0;"></div>
<div class="a pt" style="left:355px;top:408px;font-size:3px;line-height:4px;color:#ddd;">Vorlage_1080...</div>
<div class="a" style="left:380px;top:408px;width:2.5px;height:4px;background:#3a6ab0;"></div>
<div class="a pt" style="left:384px;top:408px;font-size:3px;line-height:4px;color:#ddd;">screencast_re...</div>
<div class="a" style="left:408px;top:408.3px;width:3.5px;height:3.2px;background:#c02040;"></div>
<div class="a" style="left:419px;top:408px;width:3.5px;height:3.8px;background:#1e8fe0;border-radius:50%"></div>
<div class="a" style="left:427px;top:408px;width:2.5px;height:4px;background:#2fa050;"></div>
<div class="a pt" style="left:431px;top:408px;font-size:3px;line-height:4px;color:#ddd;">AlLabS-Lab...</div>
<div class="a" style="left:457px;top:408px;width:2.5px;height:4px;background:#2fa050;"></div>
<div class="a pt" style="left:461px;top:408px;font-size:3px;line-height:4px;color:#ddd;">Arbeits_Offstud...</div>
<div class="a" style="left:488px;top:408.6px;width:2.6px;height:2.8px;background:transparent;border:.6px solid #bbb;opacity:.7"></div>
<div class="a" style="left:494px;top:408.6px;width:2.6px;height:2.8px;background:transparent;border:.6px solid #bbb;opacity:.7"></div>
<div class="a" style="left:499px;top:408.6px;width:2.6px;height:2.8px;background:transparent;border:.6px solid #bbb;opacity:.7"></div>
<div class="a" style="left:505px;top:408.6px;width:2.6px;height:2.8px;background:transparent;border:.6px solid #bbb;opacity:.7"></div>
<div class="a" style="left:510px;top:408.6px;width:2.6px;height:2.8px;background:transparent;border:.6px solid #bbb;opacity:.7"></div>
<div class="a pt" style="left:517px;top:408px;font-size:3px;line-height:4px;color:#ccc;">14:12</div>
<div class="a" style="left:530px;top:408.5px;width:4px;height:3.0px;background:transparent;border:.6px solid #ddd"></div>
<div class="a" style="left:516.7px;top:390.8px;width:18.4px;height:17px;background:#262626;border-radius:4px"></div>
<svg class="a" style="left:0;top:0" width="960" height="480" viewBox="0 0 960 480"><path transform="translate(517.200 391.800) scale(0.7083)" d="M19.14,12.94c0.04-0.3,0.06-0.61,0.06-0.94c0-0.32-0.02-0.64-0.07-0.94l2.03-1.58c0.18-0.14,0.23-0.41,0.12-0.61 l-1.92-3.32c-0.12-0.22-0.37-0.29-0.59-0.22l-2.39,0.96c-0.5-0.38-1.03-0.7-1.62-0.94L14.4,2.81c-0.04-0.24-0.24-0.41-0.48-0.41 h-3.84c-0.24,0-0.43,0.17-0.47,0.41L9.25,5.35C8.66,5.59,8.12,5.92,7.63,6.29L5.24,5.33c-0.22-0.08-0.47,0-0.59,0.22L2.74,8.87 C2.62,9.08,2.66,9.34,2.86,9.48l2.03,1.58C4.84,11.36,4.8,11.69,4.8,12s0.02,0.64,0.07,0.94l-2.03,1.58 c-0.18,0.14-0.23,0.41-0.12,0.61l1.92,3.32c0.12,0.22,0.37,0.29,0.59,0.22l2.39-0.96c0.5,0.38,1.03,0.7,1.62,0.94l0.36,2.54 c0.05,0.24,0.24,0.41,0.48,0.41h3.84c0.24,0,0.44-0.17,0.47-0.41l0.36-2.54c0.59-0.24,1.13-0.56,1.62-0.94l2.39,0.96 c0.22,0.08,0.47,0,0.59-0.22l1.92-3.32c0.12-0.22,0.07-0.47-0.12-0.61L19.14,12.94z" fill="#fff"/><circle cx="525.7" cy="400.3" r="1.65" fill="#1d1d1d"/></svg>
<div class="a" style="left:53px;top:140px;width:486px;height:274px;background:transparent;border:1px solid #a39640"></div>

<!-- right video -->
<div class="a" style="left:543px;top:140px;width:365.8px;height:273.5px;background:#343b37"></div>
<div class="a" style="left:545.5px;top:142.5px;width:360.8px;height:268px;background:linear-gradient(90deg,#f5f5f6,#f9f9f9 35%,#f9f9f9 65%,#f4f4f5);overflow:hidden">
<svg width="361" height="268" viewBox="545.5 142.5 361 268" style="position:absolute;left:0;top:0">
<defs>
<linearGradient id="lap" x1="0" y1="0" x2="0" y2="1"><stop offset="0" stop-color="#ddd4dc"/><stop offset="0.45" stop-color="#e8e3e9"/><stop offset="1" stop-color="#ece9ee"/></linearGradient>
<linearGradient id="hair" x1="0" y1="0" x2="0" y2="1"><stop offset="0" stop-color="#6e5040"/><stop offset="0.5" stop-color="#4e3426"/><stop offset="1" stop-color="#3c281e"/></linearGradient>
<radialGradient id="skin" cx="0.5" cy="0.42" r="0.62"><stop offset="0" stop-color="#fae2d6"/><stop offset="0.65" stop-color="#f3cab6"/><stop offset="1" stop-color="#e6ae96"/></radialGradient>
<linearGradient id="neck" x1="0" y1="0" x2="0" y2="1"><stop offset="0" stop-color="#e2ae98"/><stop offset="1" stop-color="#f4d0be"/></linearGradient>
</defs>
<rect x="578" y="405.5" width="320" height="6" fill="#dcd8e4"/>
<!-- hair back -->
<path d="M698 238 C694 212 695 188 705 175 C713 165 723 160.5 734 160.5 C746 160.5 756 165 764 175 C773 188 775 212 771 238 L767 252 L740 252 L705 238 Z" fill="url(#hair)"/>
<!-- jacket -->
<path d="M710 256 C700 264 690 270 680 273 L655 277 C652 279 651 282 649 288 C645 300 638 312 630 320 C622 330 615 342 606 352 C596 362 586 370 583 380 C580 390 582 400 588 405 L616 405.8 C620 407 624 409 626 410.5 L640 410.5 L640 310 L708 310 Z" fill="#261d22"/>
<path d="M752 266 L783 276 C795 279 806 280 812 282 C816 284 817 287 818 291 L846 336 L865 362 C874 370 880 374 883 383 C886 392 886 402 884 405.5 C875 407 860 407 852 408 L846 410.5 L828 410.5 L828 310 L754 310 Z" fill="#261d22"/>
<!-- shirt -->
<path d="M709 258 L754 268 L755 310 L709 310 Z" fill="#f8f4f1"/>
<path d="M709 258 L722 300 L731 292 L744 300 L754 268 L731 289 Z" fill="#f0e9e4"/>
<!-- neck -->
<path d="M713 244 L752 244 L753 266 L731 289 L710 258 Z" fill="url(#neck)"/>
<!-- ponytail -->
<path d="M756 248 C772 262 788 284 793 312 L754 312 L754 258 Z" fill="#533727"/>
<!-- face -->
<path d="M702 214 C701 192 714 180 734 180 C754 180 767 192 766 214 C765 240 753 261 734 261.5 C715 261 703 240 702 214 Z" fill="url(#skin)"/>
<!-- hair sides over face -->
<path d="M698 222 C696 196 702 178 712 170 C720 164 728 162 734 162 C746 162 756 166 763 174 C772 188 772 206 771 224 L766 226 C767 204 760 186 742 180.5 C730 179 716 183 709 192 C704 200 703 212 703 226 Z" fill="#573a2b"/>
<path d="M734 164 C746 164 756 168 762 178 C754 175 746 175 738 180 Z" fill="#7a5a48" opacity="0.55"/>
<!-- brows eyes -->
<path d="M709.5 208 Q718 204 726.5 207" stroke="#4a2e22" stroke-width="1.8" fill="none"/>
<path d="M741.5 207 Q750 204 758.5 208" stroke="#4a2e22" stroke-width="1.8" fill="none"/>
<ellipse cx="719" cy="214.5" rx="4.2" ry="2" fill="#fff"/>
<ellipse cx="749" cy="214.5" rx="4.2" ry="2" fill="#fff"/>
<circle cx="719" cy="214.5" r="1.9" fill="#4a5a70"/>
<circle cx="749" cy="214.5" r="1.9" fill="#4a5a70"/>
<path d="M714.5 213.5 Q719 211 723.5 213.5" stroke="#2a1e1e" stroke-width="1.1" fill="none"/>
<path d="M744.5 213.5 Q749 211 753.5 213.5" stroke="#2a1e1e" stroke-width="1.1" fill="none"/>
<path d="M731 226 Q729 231 734 232 Q739 231 737 226" stroke="#d89a82" stroke-width="1" fill="none"/>
<!-- mouth -->
<path d="M720.5 238 Q734 235.5 748 238 Q745 250 734 250 Q723 250 720.5 238 Z" fill="#cf5e66"/>
<path d="M722.5 239 Q734 237 746 239 Q744.5 244 734 244.5 Q724.5 244 722.5 239 Z" fill="#fdf8f4"/>
<!-- headset -->
<path d="M698.5 222 C695 196 698 180 706 172 C714 164 724 161.5 734 161.5 C746 161.5 756 166 763 174 C771 184 772 204 770 224" stroke="#8a8a92" stroke-width="1" fill="none"/>
<rect x="694" y="212.5" width="10" height="26" rx="4.5" fill="#2a2a30"/>
<rect x="695.2" y="215.5" width="3.5" height="20" rx="1.7" fill="#7a7a84"/>
<rect x="765" y="213.5" width="11" height="26.5" rx="4.5" fill="#2a2a30"/>
<rect x="771" y="216.5" width="3.5" height="20" rx="1.7" fill="#7a7a84"/>
<path d="M770 236 L755 246" stroke="#222" stroke-width="1.6"/>
<circle cx="753.7" cy="246.3" r="3.3" fill="#1a1a1e"/>
<path d="M771 240 C778 250 784 265 790 292" stroke="#333" stroke-width="0.8" fill="none"/>
<!-- laptop -->
<path d="M629 410.5 L629 313 Q629 309.5 633 309.5 L823.5 309.5 Q827.5 309.5 827.5 313.5 L827.5 410.5 Z" fill="url(#lap)"/>
<!-- hand -->
<path d="M828 392 C836 394 842 400 846 410.5 L828 410.5 Z" fill="#e6b09a"/>
</svg>
</div>
<div class="a" style="left:885.5px;top:389.7px;width:19.8px;height:20.2px;background:#1d1d1d;border-radius:4px"></div>
<svg class="a" style="left:0;top:0" width="960" height="480" viewBox="0 0 960 480"><path transform="translate(886.675 392.075) scale(0.7188)" d="M19.14,12.94c0.04-0.3,0.06-0.61,0.06-0.94c0-0.32-0.02-0.64-0.07-0.94l2.03-1.58c0.18-0.14,0.23-0.41,0.12-0.61 l-1.92-3.32c-0.12-0.22-0.37-0.29-0.59-0.22l-2.39,0.96c-0.5-0.38-1.03-0.7-1.62-0.94L14.4,2.81c-0.04-0.24-0.24-0.41-0.48-0.41 h-3.84c-0.24,0-0.43,0.17-0.47,0.41L9.25,5.35C8.66,5.59,8.12,5.92,7.63,6.29L5.24,5.33c-0.22-0.08-0.47,0-0.59,0.22L2.74,8.87 C2.62,9.08,2.66,9.34,2.86,9.48l2.03,1.58C4.84,11.36,4.8,11.69,4.8,12s0.02,0.64,0.07,0.94l-2.03,1.58 c-0.18,0.14-0.23,0.41-0.12,0.61l1.92,3.32c0.12,0.22,0.37,0.29,0.59,0.22l2.39-0.96c0.5,0.38,1.03,0.7,1.62,0.94l0.36,2.54 c0.05,0.24,0.24,0.41,0.48,0.41h3.84c0.24,0,0.44-0.17,0.47-0.41l0.36-2.54c0.59-0.24,1.13-0.56,1.62-0.94l2.39,0.96 c0.22,0.08,0.47,0,0.59-0.22l1.92-3.32c0.12-0.22,0.07-0.47-0.12-0.61L19.14,12.94z" fill="#fff"/><circle cx="895.3" cy="400.7" r="1.75" fill="#1d1d1d"/></svg>

</body></html>
